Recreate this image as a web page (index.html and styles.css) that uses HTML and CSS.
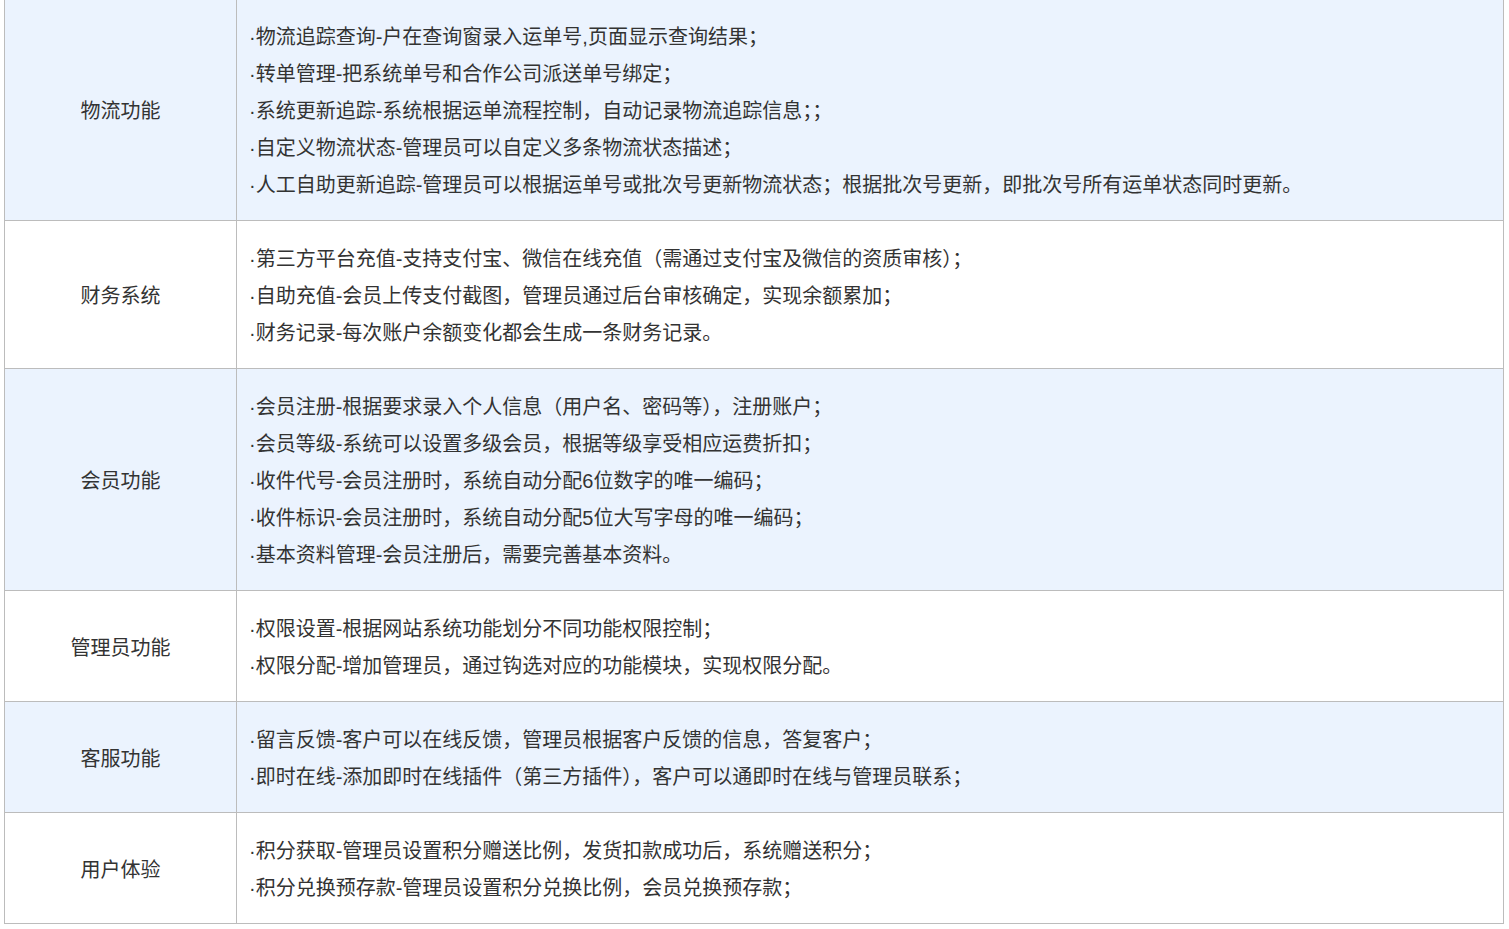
FILE: index.html
```html
<!DOCTYPE html>
<html lang="zh-CN">
<head>
<meta charset="utf-8">
<title>功能列表</title>
<link rel="stylesheet" href="styles.css">
</head>
<body>
<table class="features">
  <colgroup><col class="c-name"><col class="c-desc"></colgroup>
  <tbody>
    <tr class="alt">
      <td class="name">物流功能</td>
      <td class="desc">
        <p>·物流追踪查询-户在查询窗录入运单号,页面显示查询结果；</p>
        <p>·转单管理-把系统单号和合作公司派送单号绑定；</p>
        <p>·系统更新追踪-系统根据运单流程控制，自动记录物流追踪信息；；</p>
        <p>·自定义物流状态-管理员可以自定义多条物流状态描述；</p>
        <p>·人工自助更新追踪-管理员可以根据运单号或批次号更新物流状态；根据批次号更新，即批次号所有运单状态同时更新。</p>
      </td>
    </tr>
    <tr>
      <td class="name">财务系统</td>
      <td class="desc">
        <p>·第三方平台充值-支持支付宝、微信在线充值（需通过支付宝及微信的资质审核）；</p>
        <p>·自助充值-会员上传支付截图，管理员通过后台审核确定，实现余额累加；</p>
        <p>·财务记录-每次账户余额变化都会生成一条财务记录。</p>
      </td>
    </tr>
    <tr class="alt">
      <td class="name">会员功能</td>
      <td class="desc">
        <p>·会员注册-根据要求录入个人信息（用户名、密码等），注册账户；</p>
        <p>·会员等级-系统可以设置多级会员，根据等级享受相应运费折扣；</p>
        <p>·收件代号-会员注册时，系统自动分配6位数字的唯一编码；</p>
        <p>·收件标识-会员注册时，系统自动分配5位大写字母的唯一编码；</p>
        <p>·基本资料管理-会员注册后，需要完善基本资料。</p>
      </td>
    </tr>
    <tr>
      <td class="name">管理员功能</td>
      <td class="desc">
        <p>·权限设置-根据网站系统功能划分不同功能权限控制；</p>
        <p>·权限分配-增加管理员，通过钩选对应的功能模块，实现权限分配。</p>
      </td>
    </tr>
    <tr class="alt">
      <td class="name">客服功能</td>
      <td class="desc">
        <p>·留言反馈-客户可以在线反馈，管理员根据客户反馈的信息，答复客户；</p>
        <p>·即时在线-添加即时在线插件（第三方插件），客户可以通即时在线与管理员联系；</p>
      </td>
    </tr>
    <tr>
      <td class="name">用户体验</td>
      <td class="desc">
        <p>·积分获取-管理员设置积分赠送比例，发货扣款成功后，系统赠送积分；</p>
        <p>·积分兑换预存款-管理员设置积分兑换比例，会员兑换预存款；</p>
      </td>
    </tr>
  </tbody>
</table>
</body>
</html>
```

FILE: styles.css
```css
html, body {
  margin: 0;
  padding: 0;
  background: #ffffff;
}
body {
  font-family: "Liberation Sans", "Noto Sans CJK SC", sans-serif;
  font-size: 20px;
  color: #333333;
}
.features {
  border-collapse: collapse;
  width: 1500px;
  margin: -2px 0 0 4px;
  table-layout: fixed;
}
.c-name { width: 232px; }
.features td {
  border: 1px solid #bcbcbc;
  padding: 20px 12px 16px;
  line-height: 37px;
  vertical-align: middle;
}
.features tr.alt td {
  background: #ebf3fe;
}
.features td.name {
  text-align: center;
  padding: 20px 4px 16px;
}
.features td.desc p {
  margin: 0;
  white-space: nowrap;
}
```
